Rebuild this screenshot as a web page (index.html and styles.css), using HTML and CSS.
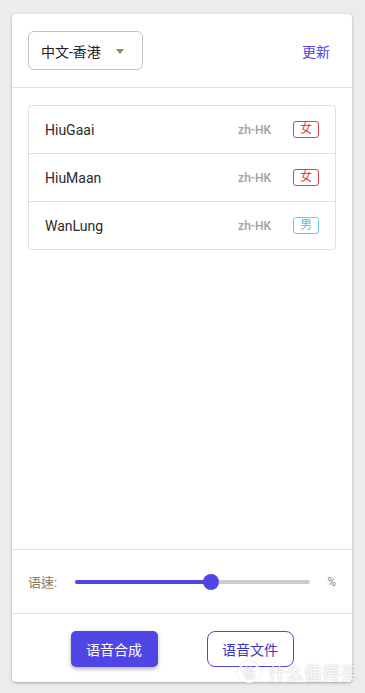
FILE: index.html
```html
<!DOCTYPE html>
<html lang="zh-HK">
<head>
    <meta charset="UTF-8">
    <meta name="viewport" content="width=device-width, initial-scale=1.0">
    <title>语音合成</title>
    <link rel="stylesheet" href="styles.css">
</head>
<body>

    <div class="card">
        <!-- Language picker -->
        <div class="card-head">
            <div class="select">
                <span>中文-香港</span>
                <span class="caret"></span>
            </div>
            <a class="refresh" href="#">更新</a>
        </div>

        <!-- Voice list -->
        <div class="card-body">
            <ul class="voices">
                <li>
                    <span class="name">HiuGaai</span>
                    <span class="locale">zh-HK</span>
                    <span class="tag female">女</span>
                </li>
                <li>
                    <span class="name">HiuMaan</span>
                    <span class="locale">zh-HK</span>
                    <span class="tag female">女</span>
                </li>
                <li>
                    <span class="name">WanLung</span>
                    <span class="locale">zh-HK</span>
                    <span class="tag male">男</span>
                </li>
            </ul>
        </div>

        <!-- Speed -->
        <div class="speed">
            <span class="label">语速:</span>
            <div class="slider">
                <div class="fill" style="width: 58%"></div>
                <div class="thumb" style="left: 58%"></div>
            </div>
            <span class="unit">%</span>
        </div>

        <div class="actions">
            <button class="btn primary">语音合成</button>
            <button class="btn outline">语音文件</button>
        </div>
    </div>

    <div class="watermark"><span class="mark">值</span>什么值得买</div>

</body>
</html>
```

FILE: styles.css
```css
* {
    box-sizing: border-box;
    margin: 0;
    padding: 0;
}

body {
    font-family: Roboto, "Noto Sans CJK SC", sans-serif;
    background-color: #ececec;
    color: #333;
    height: 693px;
    padding: 14px 13px 11px 12px;
    overflow: hidden;
}

.card {
    background-color: #fff;
    border-radius: 4px;
    box-shadow: 0 1px 3px rgba(0, 0, 0, 0.3);
    height: 668px;
    display: flex;
    flex-direction: column;
}

.card-head {
    display: flex;
    align-items: center;
    justify-content: space-between;
    padding: 17px 22px 17px 16px;
    border-bottom: 1px solid #e0e0e0;
}

.select {
    width: 115px;
    height: 39px;
    border: 1px solid #c4c4c4;
    border-radius: 6px;
    display: flex;
    align-items: center;
    padding: 0 12px;
    font-size: 14px;
    color: #222;
    gap: 15px;
}

.caret {
    width: 0;
    height: 0;
    border-left: 4px solid transparent;
    border-right: 4px solid transparent;
    border-top: 5px solid #9a8660;
    margin-top: 1px;
}

.refresh {
    font-size: 14px;
    color: #5046e5;
    text-decoration: none;
}

.card-body {
    flex: 1;
    padding: 17px 16px 16px;
}

.voices {
    list-style: none;
    border: 1px solid #e0e0e0;
    border-radius: 4px;
}

.voices li {
    display: flex;
    align-items: center;
    height: 48px;
    padding: 0 16px;
    border-bottom: 1px solid #e0e0e0;
}

.voices li:last-child {
    border-bottom: none;
    height: 47px;
}

.name {
    flex: 1;
    font-size: 14px;
    color: #2a2a2a;
}

.locale {
    font-size: 12px;
    font-weight: 500;
    color: #a0a0a0;
    margin-right: 22px;
}

.tag {
    width: 26px;
    height: 17px;
    border: 1px solid;
    border-radius: 3px;
    font-size: 12px;
    line-height: 15px;
    text-align: center;
}

.tag.female {
    color: #d9434f;
    border-color: #d9434f;
}

.tag.male {
    color: #52c0ea;
    border-color: #6cc7ee;
}

.speed {
    display: flex;
    align-items: center;
    height: 65px;
    padding: 0 16px;
    border-top: 1px solid #e0e0e0;
    border-bottom: 1px solid #e0e0e0;
}

.label {
    font-size: 13px;
    color: #8a7a5a;
    width: 47px;
}

.slider {
    position: relative;
    flex: 0 0 235px;
    height: 4px;
    border-radius: 2px;
    background-color: #cccccc;
}

.fill {
    height: 4px;
    border-radius: 2px;
    background-color: #5046e5;
}

.thumb {
    position: absolute;
    top: -6px;
    width: 16px;
    height: 16px;
    margin-left: -8px;
    border-radius: 50%;
    background-color: #5046e5;
}

.unit {
    margin-left: auto;
    font-size: 12px;
    color: #8a8a8a;
}

.actions {
    display: flex;
    justify-content: center;
    gap: 49px;
    padding: 17px 0 15px;
}

.btn {
    width: 87px;
    height: 36px;
    font-family: Roboto, "Noto Sans CJK SC", sans-serif;
    font-size: 14px;
    cursor: pointer;
}

.btn.primary {
    background-color: #5046e5;
    color: #fff;
    border: none;
    border-radius: 5px;
    box-shadow: 0 2px 4px rgba(0, 0, 0, 0.3);
}

.btn.outline {
    background-color: #fff;
    color: #3a34c0;
    border: 1px solid #5046e5;
    border-radius: 8px;
}

.watermark {
    position: absolute;
    left: 238px;
    top: 659px;
    display: flex;
    align-items: center;
    gap: 8px;
    font-family: "Noto Sans CJK SC", sans-serif;
    font-size: 18px;
    color: rgba(255, 255, 255, 0.85);
    text-shadow: 0 0 2px rgba(0, 0, 0, 0.25);
}

.mark {
    width: 22px;
    height: 22px;
    border-radius: 50%;
    border: 2px solid rgba(255, 255, 255, 0.85);
    box-shadow: 0 0 2px rgba(0, 0, 0, 0.2);
    font-size: 13px;
    line-height: 18px;
    text-align: center;
}
```
